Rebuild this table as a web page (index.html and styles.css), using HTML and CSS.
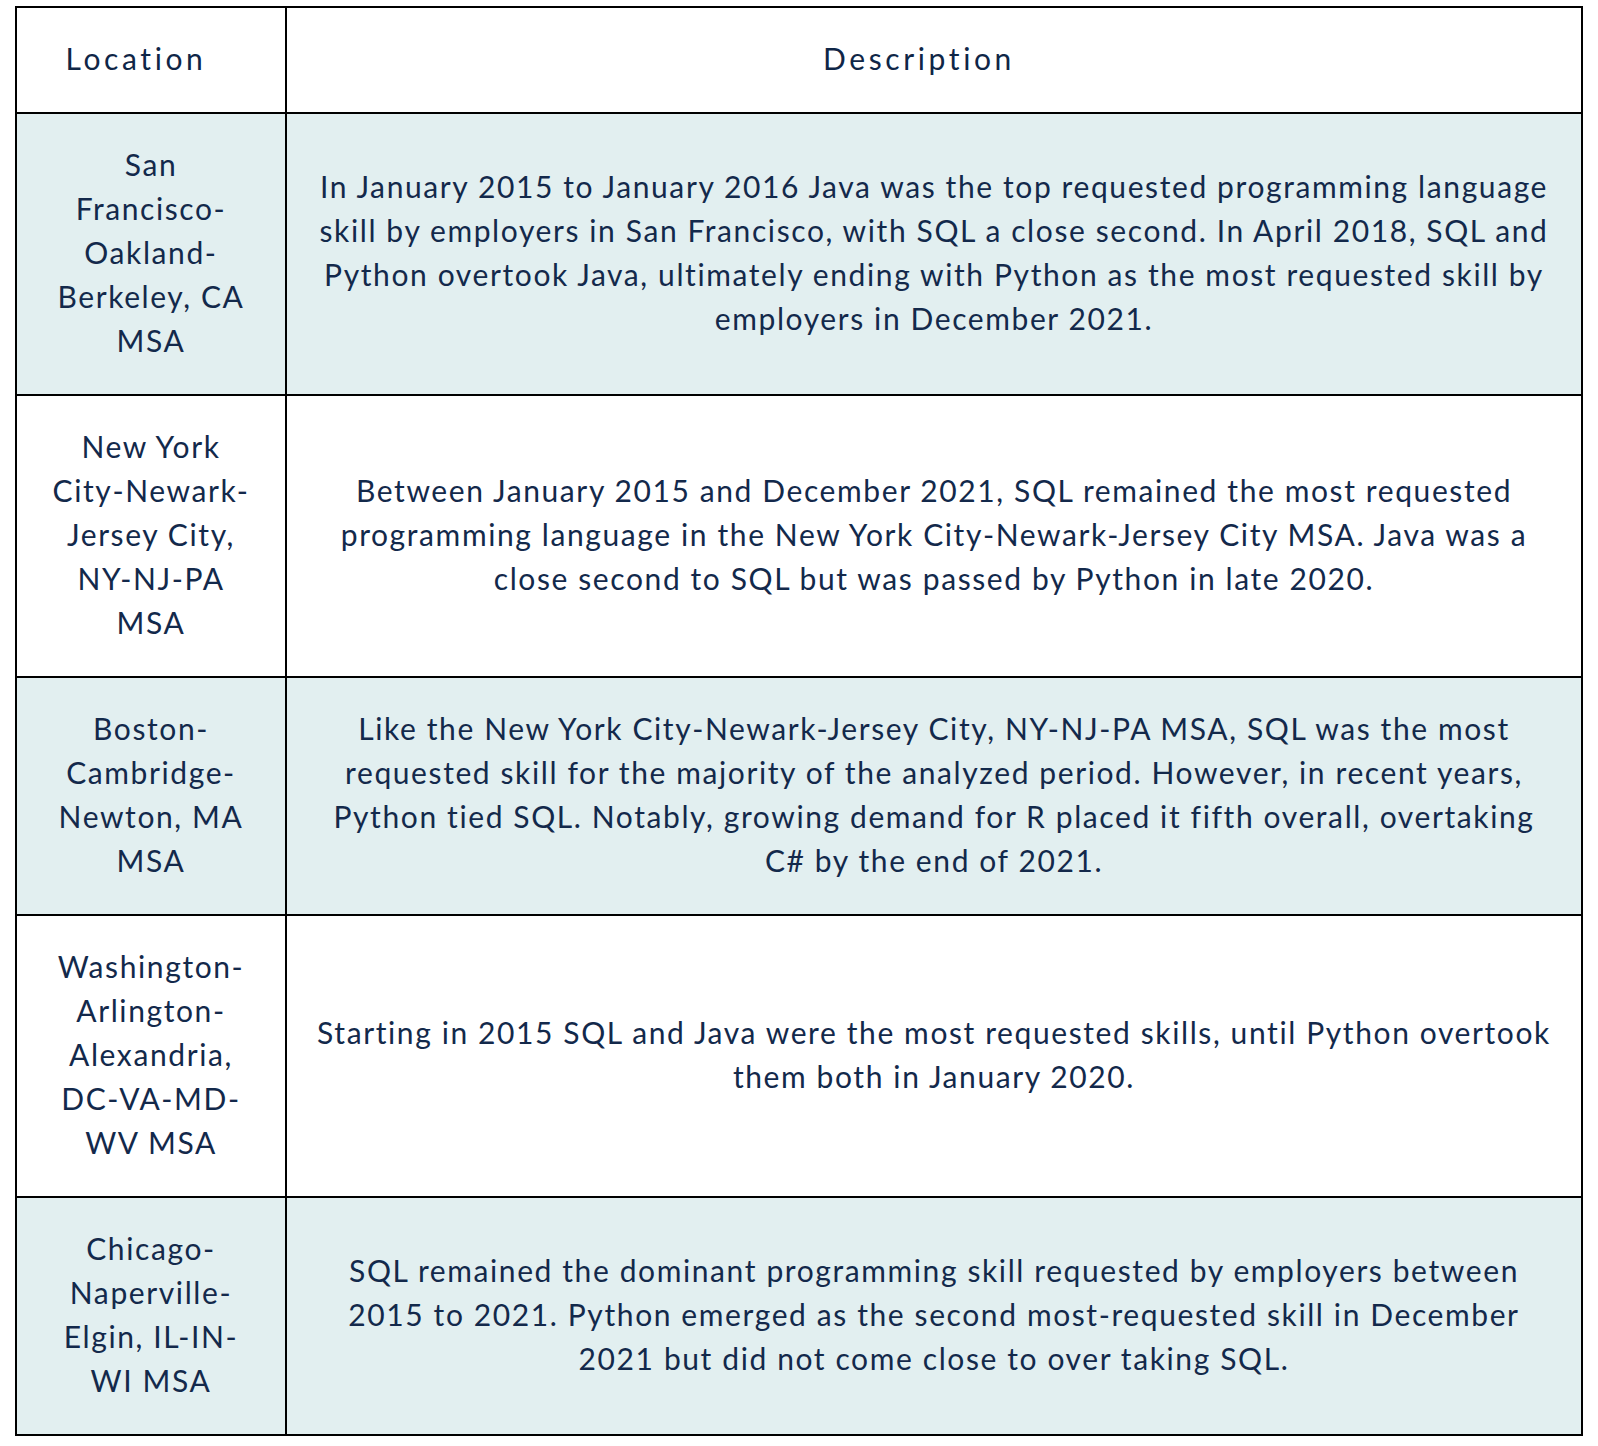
FILE: index.html
```html
<!DOCTYPE html>
<html lang="en">
<head>
<meta charset="utf-8">
<title>Programming skills by location</title>
<link rel="stylesheet" href="styles.css">
</head>
<body>
<table class="skills">
  <colgroup>
    <col class="col-loc">
    <col class="col-desc">
  </colgroup>
  <thead>
    <tr>
      <th>Location</th>
      <th>Description</th>
    </tr>
  </thead>
  <tbody>
    <tr class="shaded">
      <td class="loc">San<br>Francisco-<br>Oakland-<br>Berkeley, CA<br>MSA</td>
      <td class="desc">In January 2015 to January 2016 Java was the top requested programming language<br>skill by employers in San Francisco, with SQL a close second. In April 2018, SQL and<br>Python overtook Java, ultimately ending with Python as the most requested skill by<br>employers in December 2021.</td>
    </tr>
    <tr>
      <td class="loc">New York<br>City-Newark-<br>Jersey City,<br>NY-NJ-PA<br>MSA</td>
      <td class="desc">Between January 2015 and December 2021, SQL remained the most requested<br>programming language in the New York City-Newark-Jersey City MSA. Java was a<br>close second to SQL but was passed by Python in late 2020.</td>
    </tr>
    <tr class="shaded">
      <td class="loc">Boston-<br>Cambridge-<br>Newton, MA<br>MSA</td>
      <td class="desc">Like the New York City-Newark-Jersey City, NY-NJ-PA MSA, SQL was the most<br>requested skill for the majority of the analyzed period. However, in recent years,<br>Python tied SQL. Notably, growing demand for R placed it fifth overall, overtaking<br>C# by the end of 2021.</td>
    </tr>
    <tr>
      <td class="loc">Washington-<br>Arlington-<br>Alexandria,<br>DC-VA-MD-<br>WV MSA</td>
      <td class="desc">Starting in 2015 SQL and Java were the most requested skills, until Python overtook<br>them both in January 2020.</td>
    </tr>
    <tr class="shaded">
      <td class="loc">Chicago-<br>Naperville-<br>Elgin, IL-IN-<br>WI MSA</td>
      <td class="desc">SQL remained the dominant programming skill requested by employers between<br>2015 to 2021. Python emerged as the second most-requested skill in December<br>2021 but did not come close to over taking SQL.</td>
    </tr>
  </tbody>
</table>
</body>
</html>
```

FILE: styles.css
```css
html, body {
  margin: 0;
  padding: 0;
  background: #ffffff;
}

body {
  font-family: "Lato", "Open Sans", "Liberation Sans", sans-serif;
  color: #13294b;
}

.skills {
  margin: 6px 0 0 15px;
  width: 1568px;
  border-collapse: collapse;
  table-layout: fixed;
}

.col-loc {
  width: 270px;
}

.skills th,
.skills td {
  border: 2px solid #000000;
  padding: 28px 10px 32px;
  font-size: 30px;
  line-height: 44px;
  letter-spacing: 1.6px;
  text-align: center;
  vertical-align: middle;
  white-space: nowrap;
}

.skills th {
  padding: 28px 40px 32px 10px;
  font-weight: 400;
  letter-spacing: 3.6px;
  color: #0f2647;
}

.skills tr.shaded td {
  background: #e2eff0;
}
```
